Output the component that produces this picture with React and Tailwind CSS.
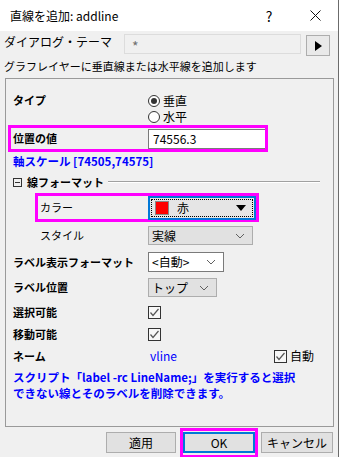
import React from 'react';

function Chevron() {
    return (
        <svg width="10" height="6" viewBox="0 0 10 6" className="shrink-0">
            <path d="M1 1 L5 5 L9 1" fill="none" stroke="#606060" strokeWidth="1" />
        </svg>
    );
}

function Combo({ label, width, white }) {
    return (
        <div
            className={`flex h-full items-center justify-between border pl-[3px] pr-[7px] text-[12px] ${
                white ? 'border-[#7a7a7a] bg-white' : 'border-[#adadad] bg-[#e1e1e1]'
            }`}
            style={{ width }}
        >
            <span>{label}</span>
            <Chevron />
        </div>
    );
}

function Check() {
    return (
        <div className="flex h-[13px] w-[13px] shrink-0 items-center justify-center border border-[#333] bg-[#f7f7f7]">
            <svg width="11" height="11" viewBox="0 0 11 11">
                <path d="M1.5 5.5 L4 8.5 L9.5 2" fill="none" stroke="#555" strokeWidth="1.2" />
            </svg>
        </div>
    );
}

function Radio({ checked, label }) {
    return (
        <div className="flex h-[16px] items-center gap-[3px]">
            <div className="flex h-[12px] w-[12px] items-center justify-center rounded-full border border-[#333] bg-white">
                {checked && <div className="h-[6px] w-[6px] rounded-full bg-[#333]" />}
            </div>
            <span className="text-[12px]">{label}</span>
        </div>
    );
}

export default function App() {
    return (
        <div className="relative h-[457px] w-[339px] overflow-hidden border-r border-[#6b6b6b] bg-[#f0f0f0] font-['Noto_Sans_CJK_JP','Noto_Sans',sans-serif] text-[11px] leading-none text-black">
            {/* title bar */}
            <div className="flex h-[31px] items-center bg-white">
                <div className="flex-1 pl-[10px] text-[12px]">直線を追加: addline</div>
                <div className="w-[46px] text-center text-[14px]">?</div>
                <div className="flex w-[46px] justify-center">
                    <svg width="11" height="11" viewBox="0 0 11 11">
                        <path d="M0.5 0.5 L10.5 10.5 M10.5 0.5 L0.5 10.5" stroke="#111" strokeWidth="1" />
                    </svg>
                </div>
            </div>

            {/* theme row */}
            <div className="mt-[3px] flex h-[22px] items-start">
                <div className="w-[124px] pl-[4px] pt-[2px] text-[12px] leading-[12px]">ダイアログ・テーマ</div>
                <div className="flex h-[20px] w-[177px] items-center border border-[#dcdcdc] bg-[#f0f0f0] pl-[7px] pt-[3px] text-[14px] text-[#707070]">
                    *
                </div>
                <div className="ml-[5px] mt-[1px] flex h-[21px] w-[24px] items-center justify-center border border-[#adadad] bg-[#e9e9e9]">
                    <svg width="8" height="10" viewBox="0 0 8 10">
                        <path d="M1 0 L8 5 L1 10 Z" fill="#000" />
                    </svg>
                </div>
            </div>

            <div className="h-[22px] pl-[4px] pt-[2px] text-[11px] leading-[16px]">
                グラフレイヤーに垂直線または水平線を追加します
            </div>

            {/* group box */}
            <div className="ml-[5px] h-[349px] w-[329px] border border-[#9a9a9a]">
                <div className="flex h-[46px]">
                    <div className="w-[142px] pl-[7px] pt-[13px] font-bold leading-[16px]">タイプ</div>
                    <div className="pt-[14px]">
                        <Radio checked label="垂直" />
                        <Radio label="水平" />
                    </div>
                </div>

                <div className="ml-[2px] flex h-[27px] w-[260px] items-center border-[3px] border-[#ff00ff]">
                    <div className="w-[137px] pl-[2px] font-bold">位置の値</div>
                    <div className="flex h-[20px] flex-1 items-center border border-r-0 border-[#7a7a7a] bg-white pl-[4px] text-[12px]">
                        74556.3
                    </div>
                </div>

                <div className="h-[18px] pl-[7px] text-[11.5px] font-bold leading-[18px] text-[#0000ff]">
                    軸スケール [74505,74575]
                </div>

                <div className="mt-[2px] flex h-[20px] items-center pl-[7px]">
                    <div className="flex h-[9px] w-[9px] items-center justify-center border border-[#333]">
                        <div className="h-px w-[5px] bg-[#333]" />
                    </div>
                    <span className="ml-[5px] font-bold">線フォーマット</span>
                    <div className="ml-[4px] mr-[13px] h-[2px] flex-1 border-t border-b border-t-[#a0a0a0] border-b-white" />
                </div>

                <div className="ml-[29px] mt-[1px] flex h-[29px] w-[224px] items-center border-[3px] border-[#ff00ff]">
                    <div className="w-[110px] pl-[2px]">カラー</div>
                    <div className="flex h-[24px] w-[108px] items-center border-2 border-[#0078d7] bg-[#e5e5e5] p-px">
                        <div className="flex h-full w-full items-center border border-dotted border-black pl-[3px] pr-[6px]">
                            <div className="h-[14px] w-[14px] border border-[#888] bg-[#ff0000]" />
                            <span className="ml-[8px] text-[12px]">赤</span>
                            <svg width="10" height="6" viewBox="0 0 10 6" className="ml-auto">
                                <path d="M0 0 L10 0 L5 6 Z" fill="#000" />
                            </svg>
                        </div>
                    </div>
                </div>

                <div className="mt-[4px] flex h-[19px] items-center">
                    <div className="w-[142px] pl-[34px]">スタイル</div>
                    <Combo label="実線" width={105} />
                </div>

                <div className="mt-[7px] flex h-[20px] items-center">
                    <div className="w-[142px] pl-[7px] font-bold">ラベル表示フォーマット</div>
                    <Combo label="<自動>" width={76} white />
                </div>

                <div className="mt-[6px] flex h-[19px] items-center">
                    <div className="w-[142px] pl-[7px] font-bold">ラベル位置</div>
                    <Combo label="トップ" width={69} />
                </div>

                <div className="mt-[7px] flex h-[16px] items-center">
                    <div className="w-[142px] pl-[7px] font-bold">選択可能</div>
                    <Check />
                </div>

                <div className="mt-[6px] flex h-[16px] items-center">
                    <div className="w-[142px] pl-[7px] font-bold">移動可能</div>
                    <Check />
                </div>

                <div className="mt-[6px] flex h-[16px] items-center">
                    <div className="w-[142px] pl-[7px] font-bold">ネーム</div>
                    <div className="w-[126px] pl-[2px] text-[12px] text-[#0000ff]">vline</div>
                    <Check />
                    <span className="ml-[3px] text-[12px]">自動</span>
                </div>

                <div className="mt-[5px] pl-[7px] text-[11.5px] font-bold leading-[16px] text-[#0000ff]">
                    <div>スクリプト「label -rc LineName;」を実行すると選択</div>
                    <div>できない線とそのラベルを削除できます。</div>
                </div>
            </div>

            {/* buttons */}
            <div className="mt-px flex items-start pl-[106px] text-[12px]">
                <div className="mt-[4px] flex h-[21px] w-[70px] items-center justify-center border border-[#adadad] bg-[#e1e1e1]">
                    適用
                </div>
                <div className="ml-[4px] h-[30px] w-[78px] border-[3px] border-[#ff00ff]">
                    <div className="mt-px flex h-[21px] w-[72px] items-center justify-center border-2 border-[#0078d7] bg-[#e1e1e1]">
                        OK
                    </div>
                </div>
                <div className="ml-[3px] mt-[4px] flex h-[21px] w-[72px] items-center justify-center border border-[#adadad] bg-[#e1e1e1]">
                    キャンセル
                </div>
            </div>
        </div>
    );
}
